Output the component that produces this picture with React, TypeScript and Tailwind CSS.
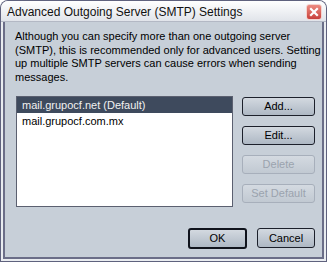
import React from "react"

const font = { fontFamily: '"Liberation Sans", Arial, sans-serif' }

function Btn({ label, disabled, isDefault, w }: { label: string; disabled?: boolean; isDefault?: boolean; w: string }) {
  const base = "flex items-center justify-center rounded-[3px] text-[11px] bg-gradient-to-b"
  const look = disabled
    ? " border border-[#a7afbb] text-[#9ba3ae] from-[#d4dae1] to-[#c1c9d2]"
    : isDefault
    ? " border-2 border-[#10131c] text-black from-[#d3d9e0] to-[#aeb8c4]"
    : " border border-[#1c202b] text-black from-[#d3d9e0] to-[#aeb8c4]"
  return <div className={base + look + " " + w}>{label}</div>
}

export default function App() {
  return (
    <div style={font} className="w-[327px] h-[262px] bg-[#5f627e] rounded-t-[8px] p-[1px] flex flex-col">
      <div className="flex-1 flex flex-col rounded-t-[7px] bg-[#e9ecf0] overflow-hidden">
        <header className="h-[21px] flex items-center justify-between pl-[6px] pr-[4px] bg-gradient-to-b from-[#ffffff] to-[#e1e4ea] border-b border-[#b3b8c4]">
          <h3 className="text-[12px] text-[#111] pt-[2px]">Advanced Outgoing Server (SMTP) Settings</h3>
          <div className="w-[16px] h-[16px] rounded-[3px] border border-[#f4d4d0] bg-gradient-to-b from-[#ec8a80] to-[#c8403c] flex items-center justify-center mt-[2px]">
            <svg width="10" height="10" viewBox="0 0 10 10">
              <path d="M2 2 L8 8 M8 2 L2 8" stroke="white" strokeWidth="2.2" strokeLinecap="square" />
            </svg>
          </div>
        </header>
        <section className="flex-1 mx-[2px] mb-[2px] border-x-2 border-b-2 border-[#6b6e88] bg-[#c7cfd8] flex flex-col px-[7px]">
          <p className="text-[11px] leading-[13.7px] text-black pt-[8px] pl-[3px] mr-[-6px]">
            Although you can specify more than one outgoing server (SMTP), this is recommended only for advanced users. Setting up multiple SMTP servers can cause errors when sending messages.
          </p>
          <div className="flex gap-[9px] mt-[11px] pl-[4px]">
            <div className="w-[220px] h-[111px] bg-white border border-[#5b6070] text-[11px]">
              <div className="h-[16px] bg-[#3e4a5d] text-[#f1f1f1] pl-[5px] leading-[16px]">mail.grupocf.net (Default)</div>
              <div className="h-[17px] text-black pl-[5px] leading-[17px]">mail.grupocf.com.mx</div>
            </div>
            <div className="flex flex-col gap-[10px] pt-[1px]">
              <Btn label="Add..." w="w-[73px] h-[19px]" />
              <Btn label="Edit..." w="w-[73px] h-[19px]" />
              <Btn label="Delete" disabled w="w-[73px] h-[19px]" />
              <Btn label="Set Default" disabled w="w-[73px] h-[19px]" />
            </div>
          </div>
          <div className="flex justify-end gap-[10px] mt-[21px]">
            <Btn label="OK" isDefault w="w-[59px] h-[21px]" />
            <Btn label="Cancel" w="w-[58px] h-[20px]" />
          </div>
        </section>
      </div>
    </div>
  )
}
